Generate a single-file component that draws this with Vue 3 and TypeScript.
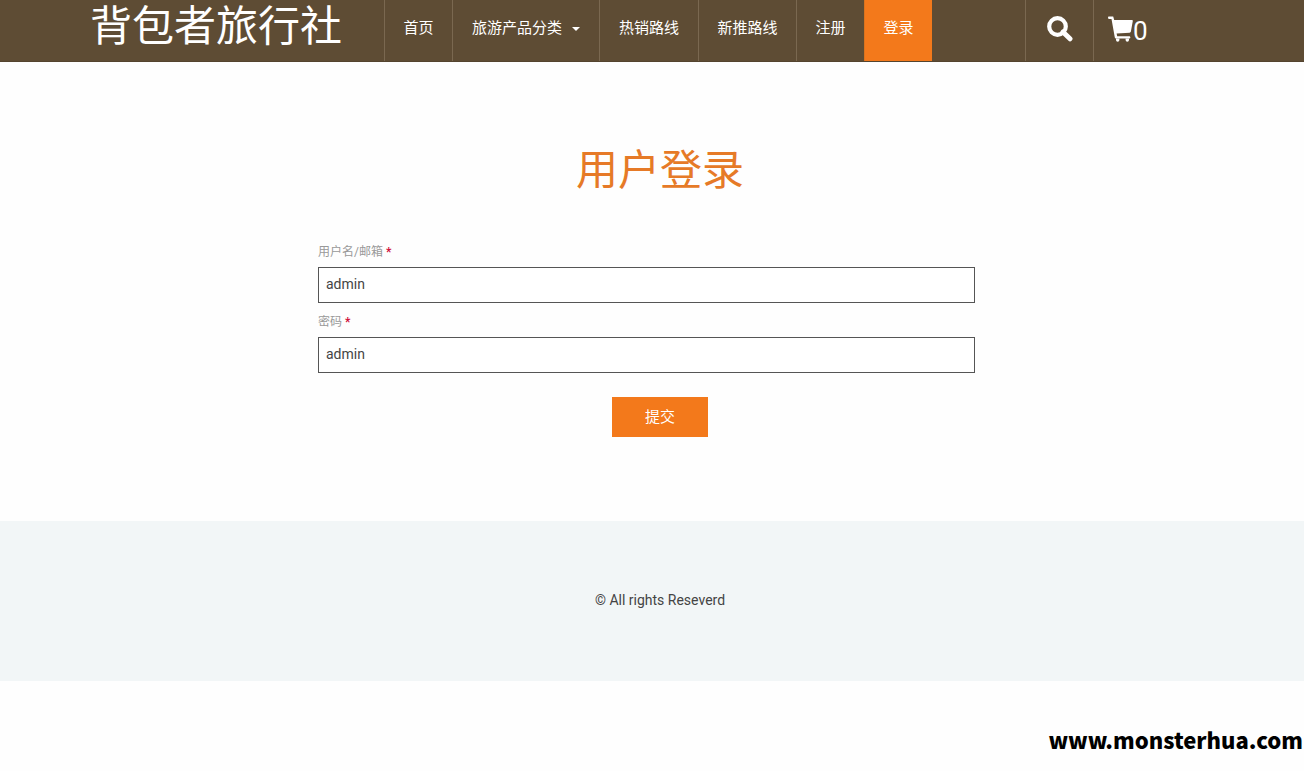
<script setup lang="ts">
import { ref } from 'vue'

interface NavItem {
  label: string
  dropdown?: boolean
  active?: boolean
}

const navItems: NavItem[] = [
  { label: '首页' },
  { label: '旅游产品分类', dropdown: true },
  { label: '热销路线' },
  { label: '新推路线' },
  { label: '注册' },
  { label: '登录', active: true },
]

const username = ref('admin')
const password = ref('admin')
const cartCount = ref(0)
</script>

<template>
  <div class="page">
    <header class="header">
      <div class="container bar">
        <a class="brand" href="#">背包者旅行社</a>
        <nav class="nav">
          <a
            v-for="item in navItems"
            :key="item.label"
            href="#"
            class="nav-link"
            :class="{ active: item.active }"
          >
            {{ item.label }}<span v-if="item.dropdown" class="caret"></span>
          </a>
        </nav>
        <div class="tools">
          <button class="search" type="button" aria-label="搜索">
            <svg width="26" height="26" viewBox="0 0 26 26" fill="none" stroke="currentColor">
              <circle cx="10.5" cy="10.5" r="8.3" stroke-width="4.2" />
              <path d="M16 16l7 6.8" stroke-width="5" stroke-linecap="round" />
            </svg>
          </button>
          <a class="cart" href="#" aria-label="购物车">
            <svg width="25" height="26" viewBox="0 0 25 26" fill="currentColor">
              <path d="M1 .5h4.2l1 3.5H24c.6 0 .9.4.8 1l-1.9 10.6c-.1.7-.6 1.1-1.3 1.2L8.6 17.6l.6 2.6H21c1.8 0 1.8 2.4 0 2.4H8c-.7 0-1.1-.3-1.2-1L3.5 2.9H1C-.3 2.9-.3.5 1 .5z" />
              <path d="M8 22.6h3.4v1.4a1.7 1.7 0 0 1-3.4 0zM17.6 22.6H21v1.4a1.7 1.7 0 0 1-3.4 0z" />
            </svg>
            <span>{{ cartCount }}</span>
          </a>
        </div>
      </div>
    </header>

    <main class="main">
      <h1 class="title">用户登录</h1>
      <form class="form" @submit.prevent>
        <label for="username">用户名/邮箱 <span class="required">*</span></label>
        <input id="username" v-model="username" type="text" />
        <label for="password">密码 <span class="required">*</span></label>
        <input id="password" v-model="password" type="text" />
        <button class="submit" type="submit">提交</button>
      </form>
    </main>

    <footer class="footer">© All rights Reseverd</footer>
    <div class="site">www.monsterhua.com</div>
  </div>
</template>

<style>
body {
  background: #fefefe;
}
</style>

<style scoped>
.page {
  font-family: Roboto, 'Noto Sans CJK SC', sans-serif;
  font-size: 14px;
  color: #444;
}
.page * {
  box-sizing: border-box;
}
a {
  color: inherit;
  text-decoration: none;
}
.header,
.main,
.footer {
  padding-left: 16px;
}
.header {
  background: #5e4c34;
  border-bottom: 1px solid #54442f;
  color: #fff;
}
.container {
  max-width: 1140px;
  margin: 0 auto;
}
.bar {
  display: flex;
  height: 61px;
}
.brand {
  flex: 0 0 294px;
  font-size: 42px;
  line-height: 54px;
  white-space: nowrap;
}
.nav {
  display: grid;
  grid-template-columns: 68px 147px 99px 98px 68px 68px;
}
.nav-link {
  display: flex;
  align-items: center;
  justify-content: center;
  padding-bottom: 8px;
  border-left: 1px solid #7a6850;
  font-size: 15px;
  white-space: nowrap;
}
.nav-link.active {
  background: #f3791b;
  border-left-color: #d9741f;
}
.caret {
  margin-top: 4px;
  margin-left: 10px;
  border: 4px solid transparent;
  border-top-color: #fff;
  border-bottom: 0;
}
.tools {
  display: flex;
  margin-left: 93px;
}
.search,
.cart {
  display: flex;
  align-items: center;
  border: 0;
  border-left: 1px solid #7a6850;
}
.search {
  justify-content: center;
  width: 68px;
  padding: 0 0 4px;
  background: none;
  color: #fff;
}
.cart {
  padding: 0 14px;
  font-size: 26px;
}
.cart svg {
  margin-bottom: 4px;
}
.main {
  padding-top: 78px;
  padding-bottom: 84px;
}
.title {
  margin: 0 0 41px;
  color: #e67a27;
  font-size: 42px;
  font-weight: 400;
  line-height: 62px;
  text-align: center;
}
.form {
  display: flex;
  flex-direction: column;
  max-width: 684px;
  margin: 0 auto;
}
.form label {
  height: 24px;
  color: #999;
  font-size: 12px;
  line-height: 18px;
}
.required {
  color: #d0103a;
  font-weight: 700;
}
.form input {
  width: 96%;
  height: 36px;
  margin: 0 0 10px;
  padding: 0 7px 2px;
  border: 1px solid #555;
  border-radius: 0;
  background: #fff;
  color: #444;
  font: inherit;
}
.submit {
  align-self: center;
  width: 96px;
  height: 40px;
  margin-top: 14px;
  padding: 0 0 3px;
  border: 0;
  background: #f3791b;
  color: #fff;
  font: inherit;
  font-size: 15px;
}
.footer {
  padding-top: 69px;
  padding-bottom: 71px;
  background: #f2f6f7;
  line-height: 20px;
  text-align: center;
}
.site {
  padding: 40px 1px 14px;
  color: #000;
  font-family: 'Noto Sans CJK SC', sans-serif;
  font-size: 22px;
  font-weight: 900;
  line-height: 36px;
  text-align: right;
}
</style>
